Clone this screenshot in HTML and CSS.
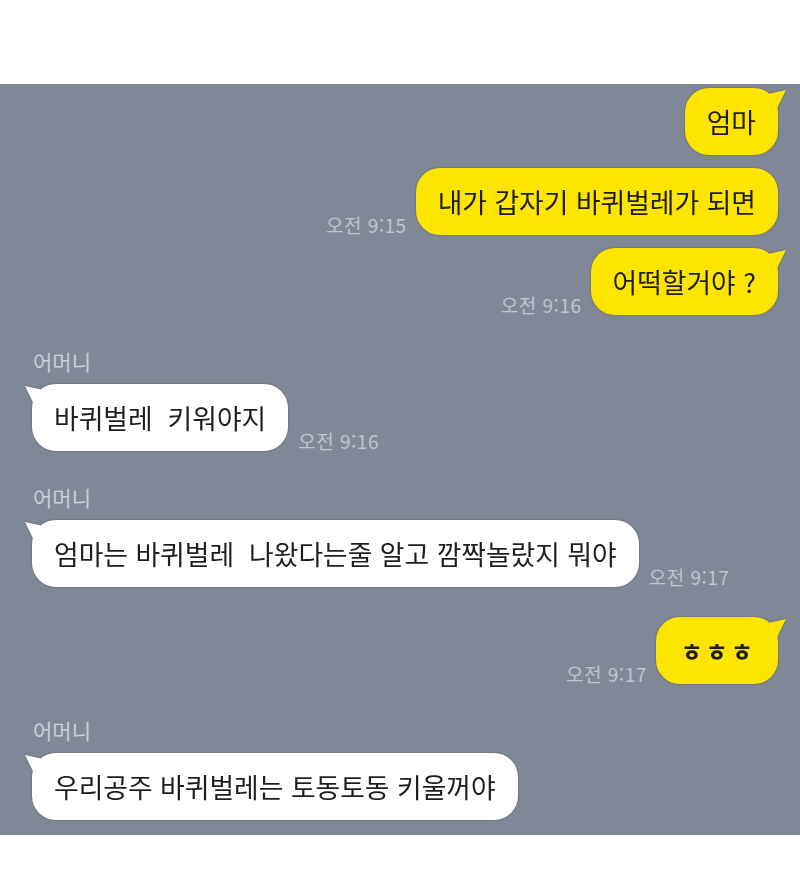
FILE: index.html
```html
<!DOCTYPE html>
<html lang="ko">
<head>
  <meta charset="UTF-8">
  <title>Chat</title>
  <link rel="stylesheet" href="styles.css">
</head>
<body>
  <div class="chat">
    <div class="row mine first">
      <div class="bubble yellow tail">엄마</div>
    </div>
    <div class="row mine">
      <span class="time">오전 9:15</span>
      <div class="bubble yellow">내가 갑자기 바퀴벌레가 되면</div>
    </div>
    <div class="row mine">
      <span class="time">오전 9:16</span>
      <div class="bubble yellow tail">어떡할거야 ?</div>
    </div>

    <div class="group">
      <div class="name">어머니</div>
      <div class="row theirs">
        <div class="bubble white tail">바퀴벌레  키워야지</div>
        <span class="time">오전 9:16</span>
      </div>
    </div>

    <div class="group">
      <div class="name">어머니</div>
      <div class="row theirs">
        <div class="bubble white tail">엄마는 바퀴벌레  나왔다는줄 알고 깜짝놀랐지 뭐야</div>
        <span class="time">오전 9:17</span>
      </div>
    </div>

    <div class="row mine gap">
      <span class="time">오전 9:17</span>
      <div class="bubble yellow tail small">ㅎㅎㅎ</div>
    </div>

    <div class="group">
      <div class="name">어머니</div>
      <div class="row theirs">
        <div class="bubble white tail">우리공주 바퀴벌레는 토동토동 키울꺼야</div>
      </div>
    </div>
  </div>
</body>
</html>
```

FILE: styles.css
```css
html, body {
  margin: 0;
  padding: 0;
  background: #fff;
}
body {
  font-family: "Noto Sans CJK KR", "Noto Sans", sans-serif;
  width: 800px;
  height: 878px;
  overflow: hidden;
}
.chat {
  margin-top: 84px;
  height: 751px;
  box-sizing: border-box;
  background: #808898;
  padding: 4px 22px 10px 32px;
  display: flex;
  flex-direction: column;
}
.row {
  display: flex;
  align-items: flex-end;
  margin-top: 13px;
}
.row.first { margin-top: 0; }
.row.gap { margin-top: 30px; }
.mine { justify-content: flex-end; }
.theirs { justify-content: flex-start; }
.group { margin-top: 34px; }
.group .row { margin-top: 11px; }
.name {
  font-size: 21px;
  line-height: 24px;
  color: #c9ced7;
  padding-left: 1px;
}
.bubble {
  position: relative;
  height: 67px;
  line-height: 67px;
  padding: 0 22px;
  border-radius: 24px;
  font-size: 26.8px;
  color: #1e1e1e;
  white-space: pre;
  filter: drop-shadow(0 0 1px rgba(60, 60, 40, 0.55));
}
.bubble.small {
  font-size: 24px;
  font-weight: bold;
  letter-spacing: 3px;
  padding: 0 22px 0 25px;
}
.yellow { background: #fee500; }
.white { background: #fff; }
.tail::after {
  content: "";
  position: absolute;
  top: 2px;
  width: 16px;
  height: 18px;
  background: inherit;
}
.yellow.tail::after {
  right: -8px;
  clip-path: polygon(0 20%, 100% 0, 45% 100%, 0 100%);
}
.white.tail::after {
  left: -7px;
  clip-path: polygon(0 0, 100% 20%, 100% 100%, 55% 100%);
}
.time {
  font-size: 19px;
  line-height: 19px;
  color: #bfc4ce;
  margin-bottom: 1px;
  letter-spacing: 0.5px;
  white-space: nowrap;
}
.mine .time { margin-right: 9px; }
.theirs .time { margin-left: 10px; }
```
